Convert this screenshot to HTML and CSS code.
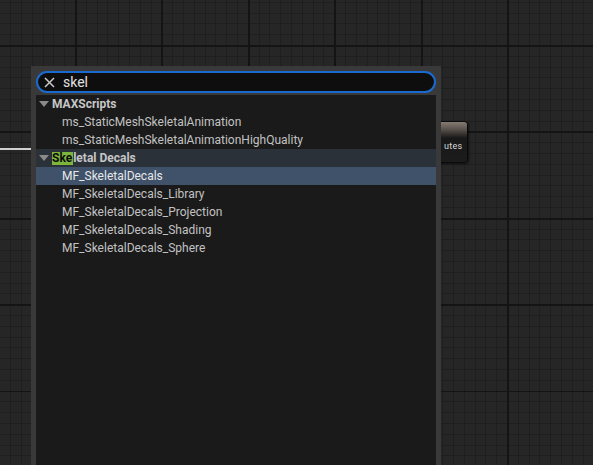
FILE: index.html
```html
<!DOCTYPE html>
<html>
<head>
<meta charset="utf-8">
<link rel="stylesheet" href="styles.css">
</head>
<body>
<div class="canvas">
  <div class="wire"></div>
  <div class="node"><div class="node-head"></div><div class="node-body">utes</div></div>
  <div class="popup">
    <div class="search">
      <svg class="clear" width="11" height="11" viewBox="0 0 11 11"><path d="M1 1 L10 10 M10 1 L1 10" stroke="#c8c8c8" stroke-width="1.5" fill="none"/></svg>
      <span class="query">skel</span>
    </div>
    <div class="list">
      <div class="row cat"><span class="tri"></span><span>MAXScripts</span></div>
      <div class="row item">ms_StaticMeshSkeletalAnimation</div>
      <div class="row item">ms_StaticMeshSkeletalAnimationHighQuality</div>
      <div class="row cat cat-active"><span class="tri"></span><span><span class="hl">Ske</span>letal Decals</span></div>
      <div class="row item selected">MF_SkeletalDecals</div>
      <div class="row item">MF_SkeletalDecals_Library</div>
      <div class="row item">MF_SkeletalDecals_Projection</div>
      <div class="row item">MF_SkeletalDecals_Shading</div>
      <div class="row item">MF_SkeletalDecals_Sphere</div>
    </div>
  </div>
</div>
</body>
</html>
```
FILE: styles.css
```css
html, body {
  margin: 0;
  padding: 0;
}
body {
  width: 593px;
  height: 465px;
  overflow: hidden;
  font-family: Roboto, "Liberation Sans", sans-serif;
}
.canvas {
  position: relative;
  width: 593px;
  height: 465px;
  overflow: hidden;
  background-color: #262626;
  background-image:
    repeating-linear-gradient(90deg, #141414 -11.4px, #141414 -9.4px, transparent -9.4px, transparent 75px),
    repeating-linear-gradient(180deg, #141414 -41.4px, #141414 -39.6px, transparent -39.6px, transparent 45px),
    repeating-linear-gradient(90deg, #1f1f1f -0.6px, #1f1f1f 0.4px, transparent 0.4px, transparent 10.2px),
    repeating-linear-gradient(180deg, #1f1f1f 1.8px, #1f1f1f 2.8px, transparent 2.8px, transparent 12.6px);
}
.wire {
  position: absolute;
  left: 0;
  top: 148px;
  width: 32px;
  height: 2px;
  background: #cfcfcf;
}
.node {
  position: absolute;
  left: 436px;
  top: 121px;
  width: 30px;
  height: 40px;
  border-radius: 4px;
  border: 1px solid #0b0b0b;
  overflow: hidden;
  background: linear-gradient(180deg, #151515, #1c1c1c);
  box-shadow: 1px 1px 2px rgba(0,0,0,0.6);
  display: flex;
  flex-direction: column;
}
.node-head {
  height: 16px;
  background: linear-gradient(180deg, #857b73 0%, #5a534d 45%, #2a2725 85%, #1a1a1a 100%);
}
.node-body {
  flex: 1;
  padding-left: 7px;
  padding-top: 3px;
  font-size: 9px;
  color: #d8d8d8;
  letter-spacing: 0.3px;
}
.popup {
  position: absolute;
  left: 31px;
  top: 66px;
  width: 400px;
  height: 410px;
  padding: 5px;
  background: #393939;
  display: flex;
  flex-direction: column;
  gap: 2px;
}
.search {
  height: 18px;
  border: 2px solid #1b6ad0;
  border-radius: 12px;
  background: #0e0e0e;
  display: flex;
  align-items: center;
  padding-left: 6px;
  flex: none;
}
.clear {
  display: block;
  flex: none;
}
.query {
  margin-left: 8px;
  font-size: 14px;
  color: #e2e2e2;
  line-height: 18px;
}
.list {
  flex: 1;
  background: #1a1a1a;
  display: flex;
  flex-direction: column;
}
.row {
  height: 18px;
  line-height: 18px;
  font-size: 12px;
  white-space: nowrap;
}
.cat {
  display: flex;
  align-items: center;
  font-weight: bold;
  color: #c6c6c6;
}
.cat-active {
  background: #2b3139;
}
.tri {
  width: 0;
  height: 0;
  margin-left: 3px;
  margin-right: 3px;
  border-left: 5px solid transparent;
  border-right: 5px solid transparent;
  border-top: 6px solid #8a8a8a;
}
.hl {
  background: #7cb53a;
  color: #0c0c0c;
  padding-right: 1px;
  display: inline-block;
  line-height: 13px;
}
.item {
  padding-left: 26px;
  color: #c2c2c2;
}
.selected {
  background: #3f5269;
  color: #e8e8e8;
}
```
